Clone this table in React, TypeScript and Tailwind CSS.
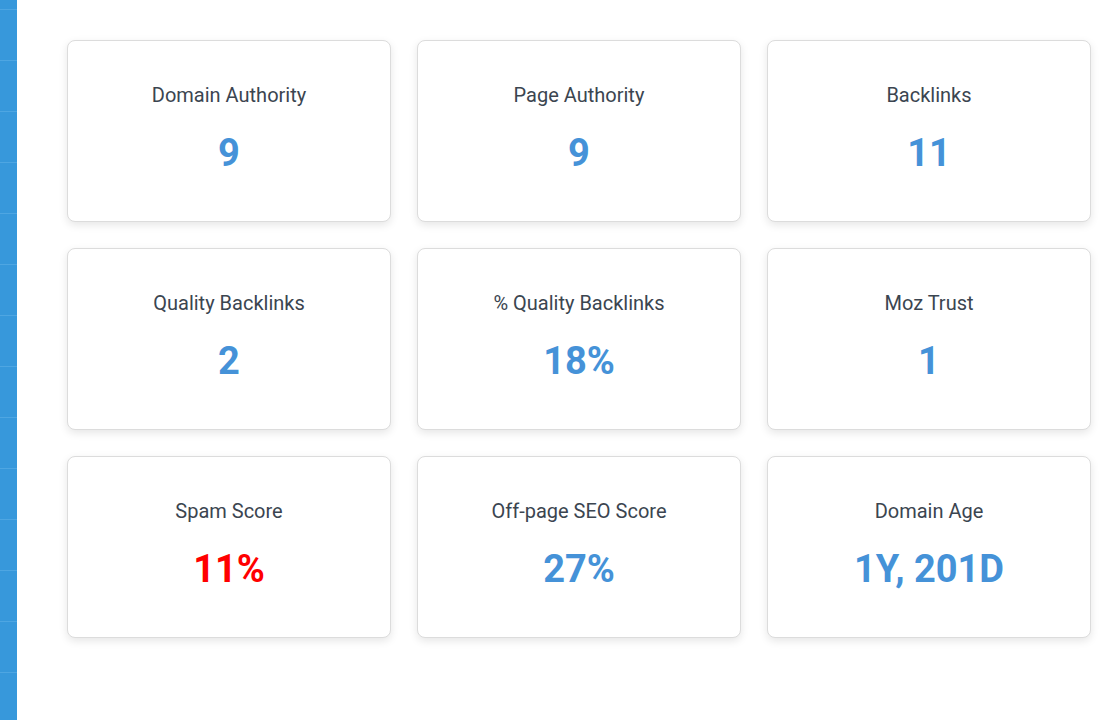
import React from "react";

const items: { label: string; value: string; red?: boolean }[] = [
  { label: "Domain Authority", value: "9" },
  { label: "Page Authority", value: "9" },
  { label: "Backlinks", value: "11" },
  { label: "Quality Backlinks", value: "2" },
  { label: "% Quality Backlinks", value: "18%" },
  { label: "Moz Trust", value: "1" },
  { label: "Spam Score", value: "11%", red: true },
  { label: "Off-page SEO Score", value: "27%" },
  { label: "Domain Age", value: "1Y, 201D" },
];

export default function App() {
  return (
    <div
      className="flex h-[720px] w-[1111px] overflow-hidden bg-white"
      style={{ fontFamily: "Roboto, 'Liberation Sans', sans-serif" }}
    >
      <div className="flex w-[17px] shrink-0 flex-col bg-[#3798db] pt-[9px]">
        {Array.from({ length: 14 }).map((_, i) => (
          <div key={i} className="h-[51px] shrink-0 border-t border-[#4ea6e2]" />
        ))}
      </div>
      <div className="pl-[50px] pt-[40px]">
        <div className="grid grid-cols-[324px_324px_324px] gap-[26px]">
          {items.map((it) => (
            <div
              key={it.label}
              className="flex h-[182px] flex-col items-center rounded-[8px] border border-[#dcdcdc] bg-white pt-[42px] shadow-[0_3px_8px_rgba(0,0,0,0.10)]"
            >
              <div className="text-[20px] leading-[24px] text-[#3b4550]">{it.label}</div>
              <div
                className={`mt-[24px] text-[38px] font-bold leading-[44px] ${
                  it.red ? "text-[#ff0000]" : "text-[#4592d8]"
                }`}
              >
                {it.value}
              </div>
            </div>
          ))}
        </div>
      </div>
    </div>
  );
}
